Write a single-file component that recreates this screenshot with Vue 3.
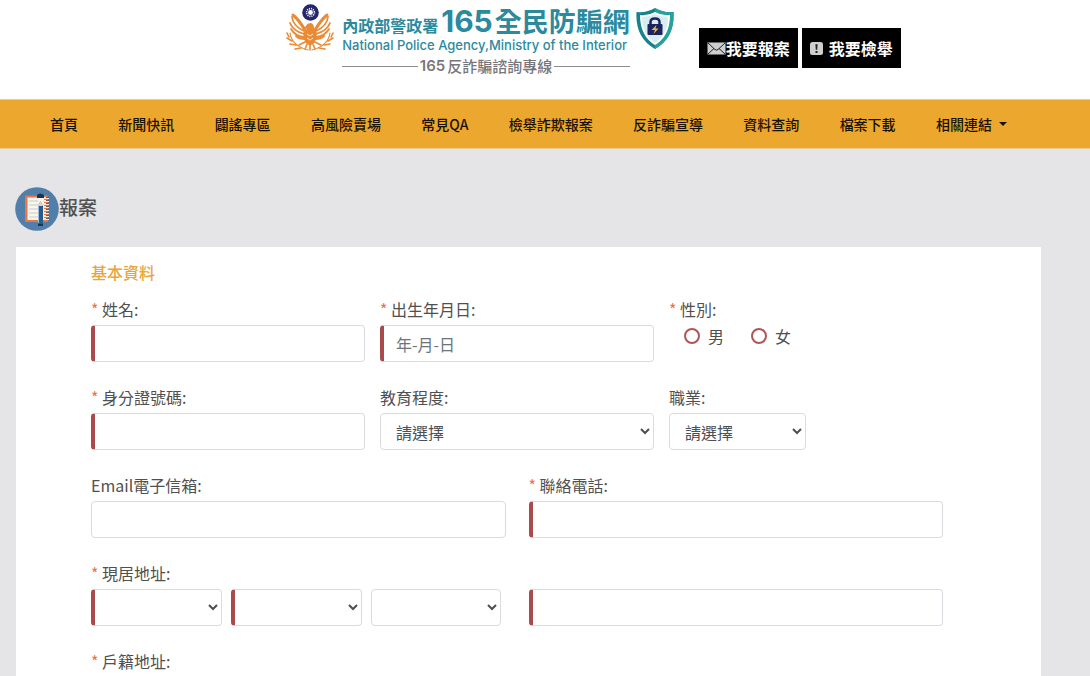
<script setup>
import {ref} from "vue";

const menu = [
  {name: "首頁"},
  {name: "新聞快訊"},
  {name: "闢謠專區"},
  {name: "高風險賣場"},
  {name: "常見QA"},
  {name: "檢舉詐欺報案"},
  {name: "反詐騙宣導"},
  {name: "資料查詢"},
  {name: "檔案下載"},
  {name: "相關連結", dropdown: true},
];

const form = ref({
  name: "",
  birthday: "",
  gender: "",
  id_number: "",
  education: "",
  job: "",
  email: "",
  phone: "",
  city: "",
  district: "",
  village: "",
  address: "",
});

</script>

<template>
  <div class="page">
    <header class="header">
      <a href="#" class="logo">
        <svg class="emblem" viewBox="0 0 48 48" aria-hidden="true">
          <g fill="none" stroke="#e98a35" stroke-linecap="round">
            <path d="M4 29 Q6 42 22 46 M44 29 Q42 42 26 46" stroke-width="1.2"/>
            <path d="M3 33 L1 29 M6 37 L1 34 M10 41 L4 40 M15 44 L9 45 M45 33 L47 29 M42 37 L47 34 M38 41 L44 40 M33 44 L39 45" stroke-width="1.6"/>
            <path d="M6 13 Q7 22 18 27 M4 19 Q7 27 18 30 M5 25 Q9 32 18 33 M10 32 Q13 35 19 35" stroke-width="1.8"/>
            <path d="M42 13 Q41 22 30 27 M44 19 Q41 27 30 30 M43 25 Q39 32 30 33 M38 32 Q35 35 29 35" stroke-width="1.8"/>
            <path d="M7 11 Q13 16 19 26 M41 11 Q35 16 29 26" stroke-width="3"/>
            <path d="M19 38 L13 41 M29 38 L35 41 M22 38 L19 45 M26 38 L29 45 M24 38 V46" stroke-width="1.6"/>
          </g>
          <path d="M20 22 Q21 19 25 19 Q28 20 28 24 L31 29 L29 38 L24 42 L19 38 L17 29 L21 25 L18 24 Z" fill="#e98a35"/>
          <path d="M21 30 L24 32 L27 30 M21 34 L24 36 L27 34" fill="none" stroke="#fff" stroke-width=".8"/>
          <circle cx="24.500" cy="8.500" r="8.300" fill="#25276b"/>
          <circle cx="24.500" cy="8.500" r="3.900" fill="none" stroke="#fff" stroke-width="1.600" stroke-dasharray="1 1.042"/>
          <circle cx="24.500" cy="8.500" r="2.400" fill="#fff"/>
        </svg>
        <div class="logo_text">
          <div class="logo_title"><span class="agency">內政部警政署</span><span class="digits">165</span><span class="site">全民防騙網</span></div>
          <div class="logo_english">National Police Agency,Ministry of the Interior</div>
          <div class="logo_hotline"><span class="hotline_digits">165</span>反詐騙諮詢專線</div>
        </div>
        <svg class="shield" viewBox="0 0 38 42" aria-hidden="true">
          <path d="M19 0 Q27 5 37.500 4 Q39 30 19 41 Q-1 30 .5 4 Q11 5 19 0Z" fill="#17828c"/>
          <path d="M19 0 Q27 5 37.500 4 Q39 30 19 41Z" fill="#28a09b"/>
          <path d="M19 4 Q26 8 34 7 Q34 28 19 37 Q4 28 4 7 Q12 8 19 4Z" fill="#fff"/>
          <path d="M19 6 Q25 9 32 9 Q32 26 19 35 Q6 26 6 9 Q13 9 19 6Z" fill="#d8edf0"/>
          <path d="M14.500 18 V14 Q14.500 10.500 19 10.500 Q23.500 10.500 23.500 14 V18" fill="none" stroke="#1d2260" stroke-width="2.500"/>
          <rect x="11.500" y="16" width="15" height="11" rx="1" fill="#1d2260"/>
          <path d="M20.500 17 L15.500 22 H19 L17.500 26 L22.500 20.500 H19.500Z" fill="#eebb35"/>
        </svg>
      </a>
      <div class="actions">
        <button type="button" class="action">
          <svg class="mail" viewBox="0 0 19 13" aria-hidden="true">
            <rect x=".5" y=".5" width="18" height="12" fill="#cfcfcf"/>
            <path d="M1 1 L8 7.500 Q9.500 8.800 11 7.500 L18 1 M1 12 L7 6.500 M18 12 L12 6.500" fill="none" stroke="#222" stroke-width="1"/>
          </svg>我要報案
        </button>
        <button type="button" class="action">
          <svg class="alert" viewBox="0 0 13 13" aria-hidden="true">
            <rect width="13" height="13" rx="2.500" fill="#cfcfcf"/>
            <path d="M5.400 2.300 H7.600 L7.200 7.800 H5.800Z M5.500 8.900 H7.500 V10.900 H5.500Z" fill="#222"/>
          </svg>我要檢舉
        </button>
      </div>
    </header>

    <nav class="nav">
      <a v-for="item in menu" :key="item.name" href="#" :class="{dropdown: item.dropdown}">{{ item.name }}</a>
    </nav>

    <main class="main">
      <h1>
        <svg class="title_icon" viewBox="0 0 44 44" aria-hidden="true">
          <circle cx="22" cy="22" r="21.800" fill="#527eaa"/>
          <rect x="10" y="8.500" width="23" height="26.500" rx="1" fill="#e87743"/>
          <path d="M12.500 10.500 H29 V33 H12.500Z" fill="#f8f5ef"/>
          <path d="M14 14 H23 M14 18 H23 M14 22 H23 M14 26 H23 M14 30 H23" stroke="#cdc9c7" stroke-width="1"/>
          <path d="M31 10 V34" stroke="#f3eadf" stroke-width="6" stroke-dasharray="2 1"/>
          <path d="M32.500 10 V34" stroke="#7b5a4c" stroke-width="3" stroke-dasharray="1 2"/>
          <path d="M22 8 Q25 5 29 8 V11 H22Z M23 37 H28 V39 H23Z" fill="#183450"/>
          <path d="M25.500 14 L28 19 V37 H23 V19Z" fill="#285b88"/>
          <path d="M25.500 14 L28 19 H23Z" fill="#e8d5bf"/>
          <path d="M23.500 19 V36" stroke="#96c1de" stroke-width="1"/>
        </svg>
        <span>報案</span>
      </h1>

      <form class="panel" @submit.prevent>
        <h2>基本資料</h2>

        <div class="row thirds">
          <div class="field">
            <label for="name" class="must">姓名:</label>
            <input id="name" v-model="form.name" type="text" class="control required">
          </div>
          <div class="field">
            <label for="birthday" class="must">出生年月日:</label>
            <input id="birthday" v-model="form.birthday" type="text" class="control required" placeholder="年-月-日">
          </div>
          <fieldset class="field">
            <legend class="must">性別:</legend>
            <div class="radios">
              <label><input v-model="form.gender" type="radio" name="gender" value="M">男</label>
              <label><input v-model="form.gender" type="radio" name="gender" value="F">女</label>
            </div>
          </fieldset>
        </div>

        <div class="row thirds">
          <div class="field">
            <label for="id_number" class="must">身分證號碼:</label>
            <input id="id_number" v-model="form.id_number" type="text" class="control required">
          </div>
          <div class="field">
            <label for="education">教育程度:</label>
            <select id="education" v-model="form.education" class="control">
              <option value="">請選擇</option>
            </select>
          </div>
          <div class="field">
            <label for="job">職業:</label>
            <select id="job" v-model="form.job" class="control half">
              <option value="">請選擇</option>
            </select>
          </div>
        </div>

        <div class="row halves">
          <div class="field">
            <label for="email">Email電子信箱:</label>
            <input id="email" v-model="form.email" type="email" class="control">
          </div>
          <div class="field">
            <label for="phone" class="must">聯絡電話:</label>
            <input id="phone" v-model="form.phone" type="tel" class="control required">
          </div>
        </div>

        <div class="row halves">
          <div class="field">
            <label for="city" class="must">現居地址:</label>
            <div class="selects">
              <select id="city" v-model="form.city" class="control required">
                <option value=""></option>
              </select>
              <select v-model="form.district" class="control required" aria-label="鄉鎮市區">
                <option value=""></option>
              </select>
              <select v-model="form.village" class="control" aria-label="村里">
                <option value=""></option>
              </select>
            </div>
          </div>
          <div class="field bottom">
            <input v-model="form.address" type="text" class="control required" aria-label="現居地址">
          </div>
        </div>

        <div class="must">戶籍地址:</div>
      </form>
    </main>
  </div>
</template>

<style>
body {
  background: #e5e4e7;
}
</style>

<style scoped>
.page {
  display: flex;
  flex-direction: column;
  min-height: 100vh;
  color: #505050;
  font-family: "Noto Sans CJK TC", sans-serif;
  font-size: 16px;
  line-height: 24px;
}

.page *, .page *::before, .page *::after {
  box-sizing: border-box;
}

a {
  color: inherit;
  text-decoration: none;
}

.header {
  display: flex;
  justify-content: center;
  align-items: flex-start;
  gap: 25px;
  height: 99px;
  padding: 4px 0 0 97px;
  background: #fff;
}

.logo {
  display: flex;
  align-items: flex-start;
  color: #2b8a9d;
}

.emblem {
  width: 48px;
  height: 48px;
  margin-right: 8px;
}

.shield {
  width: 38px;
  height: 42px;
  margin: 4px 0 0 6px;
}

.logo_title {
  display: flex;
  align-items: baseline;
  height: 34px;
  line-height: 34px;
  white-space: nowrap;
}

.agency {
  font-weight: 700;
}

.digits {
  margin: 0 2px 0 3px;
  font-family: Inter, sans-serif;
  font-size: 30px;
  font-weight: 700;
}

.site {
  font-size: 27px;
  font-weight: 700;
}

.logo_english {
  font-family: Inter, sans-serif;
  font-size: 13px;
  font-weight: 500;
  line-height: 14px;
  white-space: nowrap;
}

.logo_hotline {
  display: flex;
  align-items: center;
  gap: 2px;
  margin-top: 4px;
  color: #77777b;
  font-size: 15px;
  font-weight: 500;
  line-height: 20px;
  white-space: nowrap;
}

.logo_hotline::before, .logo_hotline::after {
  content: "";
  flex: 1;
  height: 1px;
  background: #8d8d90;
}

.hotline_digits {
  font-family: Inter, sans-serif;
  font-weight: 600;
}

.actions {
  display: flex;
  gap: 4px;
  padding-top: 24px;
}

.action {
  display: flex;
  justify-content: center;
  align-items: center;
  width: 99px;
  height: 40px;
  padding: 0;
  border: 0;
  background: #000;
  color: #fff;
  font: 700 16px "Noto Sans CJK TC", sans-serif;
  white-space: nowrap;
}

.mail {
  width: 19px;
  height: 13px;
}

.alert {
  width: 13px;
  height: 13px;
  margin-right: 6px;
}

.nav {
  display: flex;
  justify-content: space-between;
  align-items: center;
  height: 50px;
  padding: 0 83px 0 50px;
  border-top: 1px solid #e9cb90;
  border-bottom: 1px solid #e9cb90;
  background: #eba72e;
  color: #1a1200;
  font-size: 14px;
  font-weight: 500;
  white-space: nowrap;
}

.dropdown {
  display: flex;
  align-items: center;
  gap: 7px;
}

.dropdown::after {
  content: "";
  border: 4px solid transparent;
  border-top-color: currentColor;
  border-bottom: 0;
}

.main {
  display: flex;
  flex: 1;
  flex-direction: column;
  padding: 38px 49px 0 15px;
}

h1 {
  display: flex;
  align-items: center;
  margin: 0 0 16px;
  font-size: 19px;
  font-weight: 500;
}

h1 span {
  padding-bottom: 4px;
}

.title_icon {
  width: 44px;
  height: 44px;
}

.panel {
  flex: 1;
  margin-left: 1px;
  padding: 13px 98px 0 75px;
  background: #fff;
}

h2 {
  margin: 0 0 13px;
  color: #e9a53a;
  font-size: 16px;
  font-weight: 500;
}

.row {
  display: grid;
  margin-bottom: 23px;
}

.thirds {
  grid-template-columns: repeat(3, 1fr);
  gap: 15px;
}

.halves {
  grid-template-columns: repeat(2, 1fr);
  gap: 23px;
}

.field {
  display: flex;
  flex-direction: column;
  gap: 4px;
  min-width: 0;
  margin: 0;
  padding: 0;
  border: 0;
}

.bottom {
  justify-content: flex-end;
}

legend {
  padding: 0;
}

.must::before {
  content: "* ";
  color: #e8714a;
}

.control {
  width: 100%;
  height: 37px;
  padding: 0 12px 0 16px;
  border: 1px solid #dbdae0;
  border-radius: 4px;
  background: #fff;
  color: #495057;
  font: 16px "Noto Sans CJK TC", sans-serif;
}

.control::placeholder {
  color: #6c757d;
  opacity: 1;
}

select.control {
  padding: 0 0 0 11px;
}

.control.required {
  padding-left: 12px;
  border-left: 4px solid #a94a4c;
}

.half {
  width: 50%;
}

.selects {
  display: grid;
  grid-template-columns: repeat(3, 1fr);
  gap: 9px;
  padding-right: 4px;
}

.radios {
  display: flex;
  gap: 27px;
  padding: 3px 0 0 15px;
}

.radios label {
  display: flex;
  align-items: center;
  gap: 8px;
}

.radios input {
  appearance: none;
  width: 16px;
  height: 16px;
  margin: 0;
  border: 2px solid #b05557;
  border-radius: 50%;
}

.radios input:checked {
  background: #b05557;
}
</style>
